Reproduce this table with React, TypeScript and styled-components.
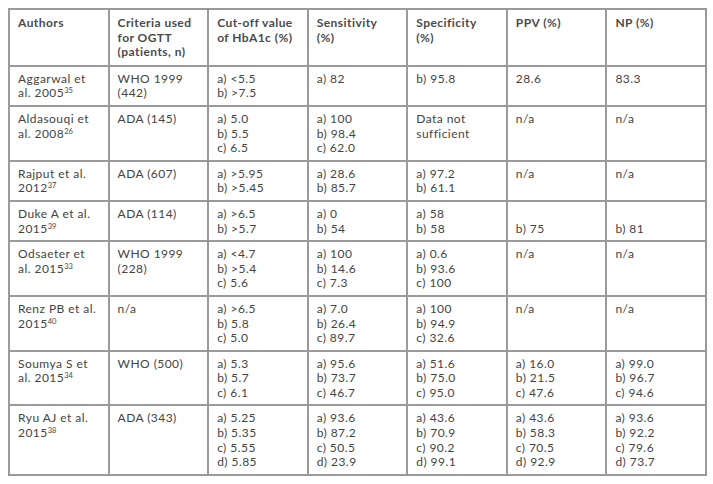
import React from 'react';
import styled, { createGlobalStyle } from 'styled-components';

const GlobalStyle = createGlobalStyle`
  html, body {
    margin: 0;
    padding: 0;
    background: #ffffff;
  }
  body {
    padding: 8px 0 0 8px;
  }
`;

type Row = {
  author: string;
  year: string;
  ref: string;
  cells: string[][];
};

const headers = [
  ['Authors'],
  ['Criteria used', 'for OGTT', '(patients, n)'],
  ['Cut-off value', 'of HbA1c (%)'],
  ['Sensitivity', '(%)'],
  ['Specificity', '(%)'],
  ['PPV (%)'],
  ['NP (%)'],
];

const rows: Row[] = [
  {
    author: 'Aggarwal et',
    year: 'al. 2005',
    ref: '35',
    cells: [['WHO 1999', '(442)'], ['a) <5.5', 'b) >7.5'], ['a) 82'], ['b) 95.8'], ['28.6'], ['83.3']],
  },
  {
    author: 'Aldasouqi et',
    year: 'al. 2008',
    ref: '26',
    cells: [
      ['ADA (145)'],
      ['a) 5.0', 'b) 5.5', 'c) 6.5'],
      ['a) 100', 'b) 98.4', 'c) 62.0'],
      ['Data not', 'sufficient'],
      ['n/a'],
      ['n/a'],
    ],
  },
  {
    author: 'Rajput et al.',
    year: '2012',
    ref: '37',
    cells: [['ADA (607)'], ['a) >5.95', 'b) >5.45'], ['a) 28.6', 'b) 85.7'], ['a) 97.2', 'b) 61.1'], ['n/a'], ['n/a']],
  },
  {
    author: 'Duke A et al.',
    year: '2015',
    ref: '39',
    cells: [['ADA (114)'], ['a) >6.5', 'b) >5.7'], ['a) 0', 'b) 54'], ['a) 58', 'b) 58'], ['', 'b) 75'], ['', 'b) 81']],
  },
  {
    author: 'Odsaeter et',
    year: 'al. 2015',
    ref: '33',
    cells: [
      ['WHO 1999', '(228)'],
      ['a) <4.7', 'b) >5.4', 'c) 5.6'],
      ['a) 100', 'b) 14.6', 'c) 7.3'],
      ['a) 0.6', 'b) 93.6', 'c) 100'],
      ['n/a'],
      ['n/a'],
    ],
  },
  {
    author: 'Renz PB et al.',
    year: '2015',
    ref: '40',
    cells: [
      ['n/a'],
      ['a) >6.5', 'b) 5.8', 'c) 5.0'],
      ['a) 7.0', 'b) 26.4', 'c) 89.7'],
      ['a) 100', 'b) 94.9', 'c) 32.6'],
      ['n/a'],
      ['n/a'],
    ],
  },
  {
    author: 'Soumya S et',
    year: 'al. 2015',
    ref: '34',
    cells: [
      ['WHO (500)'],
      ['a) 5.3', 'b) 5.7', 'c) 6.1'],
      ['a) 95.6', 'b) 73.7', 'c) 46.7'],
      ['a) 51.6', 'b) 75.0', 'c) 95.0'],
      ['a) 16.0', 'b) 21.5', 'c) 47.6'],
      ['a) 99.0', 'b) 96.7', 'c) 94.6'],
    ],
  },
  {
    author: 'Ryu AJ et al.',
    year: '2015',
    ref: '38',
    cells: [
      ['ADA (343)'],
      ['a) 5.25', 'b) 5.35', 'c) 5.55', 'd) 5.85'],
      ['a) 93.6', 'b) 87.2', 'c) 50.5', 'd) 23.9'],
      ['a) 43.6', 'b) 70.9', 'c) 90.2', 'd) 99.1'],
      ['a) 43.6', 'b) 58.3', 'c) 70.5', 'd) 92.9'],
      ['a) 93.6', 'b) 92.2', 'c) 79.6', 'd) 73.7'],
    ],
  },
];

const Table = styled.table`
  width: 699px;
  border-collapse: collapse;
  table-layout: fixed;
  font-family: Lato, 'Open Sans', 'Liberation Sans', sans-serif;
  font-size: 12px;
  line-height: 14.6px;
  letter-spacing: 0.45px;
  color: #444444;
`;

const Cell = styled.td<{ $head?: boolean }>`
  border: 2px solid #9a9a9a;
  vertical-align: top;
  padding: ${(p) => (p.$head ? '6px 8px 5px 8px' : '5px 8px 4px 8px')};
  font-weight: ${(p) => (p.$head ? 700 : 400)};
  color: ${(p) => (p.$head ? '#4a4a4a' : '#444444')};
  white-space: nowrap;
`;

const Line = styled.div`
  height: 14.6px;
`;

const Ref = styled.sup`
  font-size: 7.5px;
  line-height: 0;
  letter-spacing: 0;
  vertical-align: 4px;
`;

function Lines({ items }: { items: string[] }) {
  return (
    <>
      {items.map((t, i) => (
        <Line key={i}>{t || '\u00a0'}</Line>
      ))}
    </>
  );
}

export default function App() {
  return (
    <>
      <GlobalStyle />
      <Table>
        <tbody>
          <tr>
            {headers.map((h, i) => (
              <Cell key={i} $head>
                <Lines items={h} />
                {h.length < 3 && <Lines items={Array(3 - h.length).fill('')} />}
              </Cell>
            ))}
          </tr>
          {rows.map((r) => (
            <tr key={r.author}>
              <Cell>
                <Line>{r.author}</Line>
                <Line>
                  {r.year}
                  <Ref>{r.ref}</Ref>
                </Line>
              </Cell>
              {r.cells.map((c, i) => (
                <Cell key={i}>
                  <Lines items={c} />
                </Cell>
              ))}
            </tr>
          ))}
        </tbody>
      </Table>
    </>
  );
}
